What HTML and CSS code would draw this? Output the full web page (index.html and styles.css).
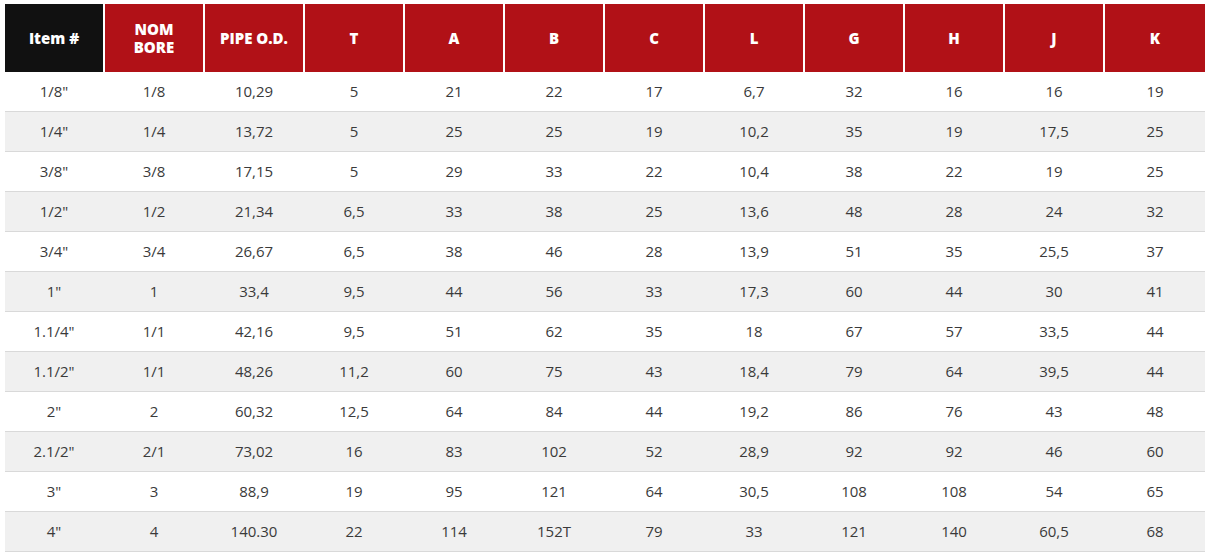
FILE: index.html
```html
<!DOCTYPE html>
<html lang="en">
<head>
<meta charset="utf-8">
<title>Pipe dimensions</title>
<link rel="stylesheet" href="styles.css">
</head>
<body>
<table class="spec">
  <colgroup>
    <col class="c"><col class="c"><col class="c"><col class="c"><col class="c"><col class="c">
    <col class="c"><col class="c"><col class="c"><col class="c"><col class="c"><col class="c">
  </colgroup>
  <thead>
    <tr>
      <th class="dark">Item #</th>
      <th>NOM<br>BORE</th>
      <th>PIPE O.D.</th>
      <th>T</th>
      <th>A</th>
      <th>B</th>
      <th>C</th>
      <th>L</th>
      <th>G</th>
      <th>H</th>
      <th>J</th>
      <th class="last">K</th>
    </tr>
  </thead>
  <tbody>
    <tr><td>1/8"</td><td>1/8</td><td>10,29</td><td>5</td><td>21</td><td>22</td><td>17</td><td>6,7</td><td>32</td><td>16</td><td>16</td><td>19</td></tr>
    <tr><td>1/4"</td><td>1/4</td><td>13,72</td><td>5</td><td>25</td><td>25</td><td>19</td><td>10,2</td><td>35</td><td>19</td><td>17,5</td><td>25</td></tr>
    <tr><td>3/8"</td><td>3/8</td><td>17,15</td><td>5</td><td>29</td><td>33</td><td>22</td><td>10,4</td><td>38</td><td>22</td><td>19</td><td>25</td></tr>
    <tr><td>1/2"</td><td>1/2</td><td>21,34</td><td>6,5</td><td>33</td><td>38</td><td>25</td><td>13,6</td><td>48</td><td>28</td><td>24</td><td>32</td></tr>
    <tr><td>3/4"</td><td>3/4</td><td>26,67</td><td>6,5</td><td>38</td><td>46</td><td>28</td><td>13,9</td><td>51</td><td>35</td><td>25,5</td><td>37</td></tr>
    <tr><td>1"</td><td>1</td><td>33,4</td><td>9,5</td><td>44</td><td>56</td><td>33</td><td>17,3</td><td>60</td><td>44</td><td>30</td><td>41</td></tr>
    <tr><td>1.1/4"</td><td>1/1</td><td>42,16</td><td>9,5</td><td>51</td><td>62</td><td>35</td><td>18</td><td>67</td><td>57</td><td>33,5</td><td>44</td></tr>
    <tr><td>1.1/2"</td><td>1/1</td><td>48,26</td><td>11,2</td><td>60</td><td>75</td><td>43</td><td>18,4</td><td>79</td><td>64</td><td>39,5</td><td>44</td></tr>
    <tr><td>2"</td><td>2</td><td>60,32</td><td>12,5</td><td>64</td><td>84</td><td>44</td><td>19,2</td><td>86</td><td>76</td><td>43</td><td>48</td></tr>
    <tr><td>2.1/2"</td><td>2/1</td><td>73,02</td><td>16</td><td>83</td><td>102</td><td>52</td><td>28,9</td><td>92</td><td>92</td><td>46</td><td>60</td></tr>
    <tr><td>3"</td><td>3</td><td>88,9</td><td>19</td><td>95</td><td>121</td><td>64</td><td>30,5</td><td>108</td><td>108</td><td>54</td><td>65</td></tr>
    <tr><td>4"</td><td>4</td><td>140.30</td><td>22</td><td>114</td><td>152T</td><td>79</td><td>33</td><td>121</td><td>140</td><td>60,5</td><td>68</td></tr>
  </tbody>
</table>
</body>
</html>
```
FILE: styles.css
```css
html, body {
  margin: 0;
  padding: 0;
  background: #ffffff;
}
body {
  padding: 4px 0 0 5px;
  font-family: "Open Sans", "Liberation Sans", sans-serif;
}
.spec {
  border-collapse: separate;
  border-spacing: 0;
  table-layout: fixed;
  width: 1200px;
}
.spec .c {
  width: 100px;
}
.spec th {
  height: 68px;
  padding: 0;
  background: #b11117;
  color: #ffffff;
  font-weight: 800;
  font-size: 15px;
  line-height: 18px;
  text-align: center;
  vertical-align: middle;
  border-right: 2px solid #ffffff;
}
.spec th.dark {
  background: #111111;
}
.spec th.last {
  border-right: 0;
}
.spec td {
  height: 38px;
  padding: 0 2px 1px 0;
  text-align: center;
  vertical-align: middle;
  font-size: 15px;
  color: #3a3a3a;
  border-bottom: 1px solid #d9d9d9;
}
.spec td:last-child {
  padding-right: 0;
}
.spec tbody tr:nth-child(even) td {
  background: #f0f0f0;
}
```
